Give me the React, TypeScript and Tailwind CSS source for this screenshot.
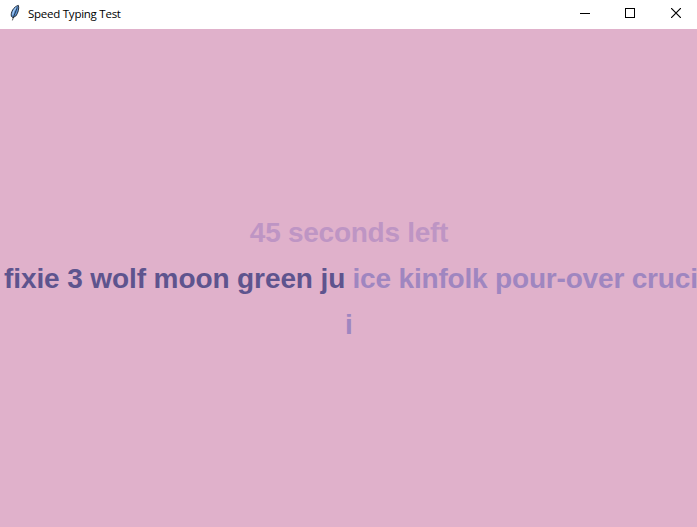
const TYPED = 'fixie 3 wolf moon green ju';
const REMAINING = 'ice kinfolk pour-over cruci';

function FeatherIcon() {
  return (
    <svg width="12" height="18" viewBox="0 0 12 18" className="block">
      <path
        d="M9.4 1.4 C10.4 4 9 9.5 6.8 12 L4 13.6 L2.4 12.4 C1.4 8.5 4.6 2.6 9.4 1.4 Z"
        fill="#5b93d6"
        stroke="#26303c"
        strokeWidth="1"
      />
      <path d="M8.2 3.4 C7.2 7 5 10.8 3.4 16.4" fill="none" stroke="#111" strokeWidth="0.7" />
      <path d="M7 3.6 C5 5.8 3.8 8.2 3.6 10.8" fill="none" stroke="#a9cdf4" strokeWidth="1.1" />
    </svg>
  );
}

function TitleBar() {
  return (
    <header className="flex h-[29px] items-start justify-between bg-white">
      <div className="flex items-start pl-[9px] pt-1">
        <FeatherIcon />
        <span className="ml-[7px] pt-px font-['Open_Sans',sans-serif] text-[11.5px] leading-[18px] tracking-[-0.25px] text-black">
          Speed Typing Test
        </span>
      </div>
      <div className="flex pt-2 pr-4" aria-hidden="true">
        <svg width="11" height="11" shapeRendering="crispEdges" className="mr-[34px]">
          <rect x="0" y="5" width="10" height="1" fill="#000" />
        </svg>
        <svg width="10" height="10" shapeRendering="crispEdges" className="mr-9">
          <rect x="0.5" y="0.5" width="9" height="9" fill="none" stroke="#000" />
        </svg>
        <svg width="10" height="10">
          <path d="M0 0 L10 10 M10 0 L0 10" stroke="#000" strokeWidth="1.2" />
        </svg>
      </div>
    </header>
  );
}

export default function App() {
  return (
    <div className="flex h-[527px] w-[697px] flex-col overflow-hidden bg-[#e0b1cb]">
      <TitleBar />
      <main className="flex flex-1 flex-col pt-[181px] font-['Liberation_Sans',Arial,sans-serif] text-[28px] leading-[46px] font-bold whitespace-pre">
        <p className="pl-px text-center tracking-[-0.27px] text-[#be95c4]">45 seconds left</p>
        <div className="flex">
          <p className="w-[347px] pl-1 tracking-[-0.1px] text-[#5e548e]">{TYPED}</p>
          <p className="w-[350px] pl-[5.5px] tracking-[-0.18px] text-[#9f86c0]">{REMAINING}</p>
        </div>
        <p className="pl-px text-center text-[#9f86c0]">i</p>
      </main>
    </div>
  );
}
